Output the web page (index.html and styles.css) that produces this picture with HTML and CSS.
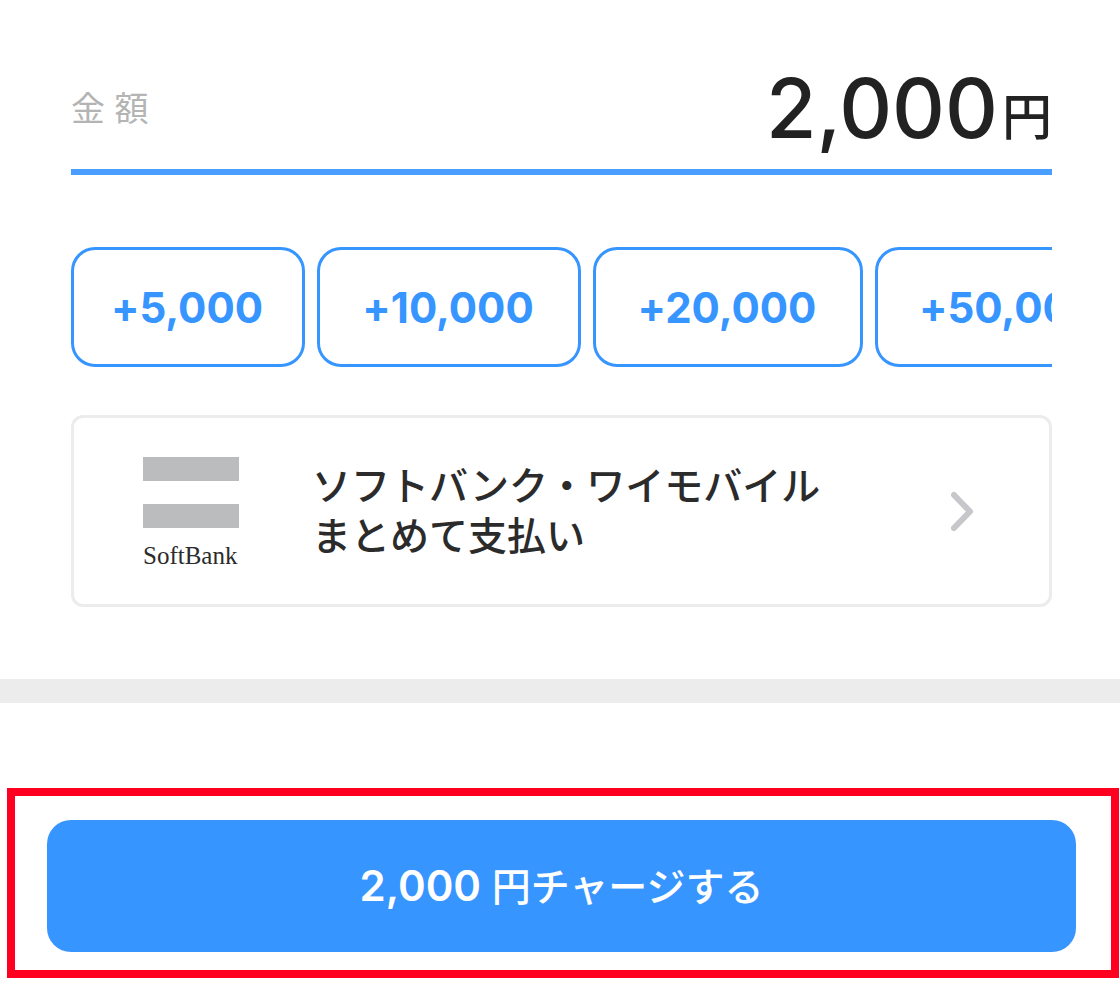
FILE: index.html
```html
<!DOCTYPE html>
<html lang="ja">
<head>
<meta charset="utf-8">
<meta name="viewport" content="width=device-width, initial-scale=1">
<title>チャージ</title>
<link rel="stylesheet" href="styles.css">
</head>
<body>
<main>
  <section class="charge">
    <div class="amount">
      <h1 class="amount-label">金 額</h1>
      <p class="amount-value"><span class="number">2,000</span><span class="yen">円</span></p>
    </div>
    <div class="presets">
      <button class="preset preset-small" type="button">+5,000</button>
      <button class="preset" type="button">+10,000</button>
      <button class="preset preset-large" type="button">+20,000</button>
      <button class="preset preset-large" type="button">+50,000</button>
    </div>
    <button class="method" type="button">
      <span class="brand">
        <span class="bar"></span>
        <span class="bar"></span>
        <span class="brand-name">SoftBank</span>
      </span>
      <span class="method-name">ソフトバンク・ワイモバイル<br>まとめて支払い</span>
      <svg class="chevron" viewBox="0 0 24 40" aria-hidden="true"><path d="M3 4L19 20.500L3 37"/></svg>
    </button>
  </section>
  <section class="action">
    <div class="highlight">
      <button class="submit" type="button">2,000 <span class="submit-text">円チャージする</span></button>
    </div>
  </section>
</main>
</body>
</html>
```

FILE: styles.css
```css
* { box-sizing: border-box; }
body {
  margin: 0;
  background: #fff;
  color: #222;
  font-family: Inter, "Noto Sans CJK JP", sans-serif;
  font-feature-settings: "calt" 0;
}
button { font: inherit; font-feature-settings: inherit; margin: 0; cursor: pointer; }
.charge { padding: 48px 68px 72px 71px; }
.amount {
  display: flex;
  justify-content: space-between;
  align-items: center;
  height: 127px;
  border-bottom: 6px solid #4a9eff;
}
.amount-label {
  margin: 0;
  font-size: 34px;
  font-weight: 400;
  line-height: 48px;
  color: #b4b4b4;
}
.amount-value { display: flex; align-items: flex-end; margin: 0; font-weight: 500; }
.number { font-size: 82px; line-height: 90px; }
.yen {
  margin-left: 4px;
  font-family: "Noto Sans CJK JP", sans-serif;
  font-size: 50px;
  line-height: 82px;
}
.presets {
  display: flex;
  gap: 12px;
  margin-top: 72px;
  overflow-x: auto;
  scrollbar-width: none;
}
.preset {
  flex: none;
  width: 264px;
  height: 120px;
  padding: 0 2px 0 0;
  border: 3px solid #3795ff;
  border-radius: 24px;
  background: #fff;
  color: #3795ff;
  font-size: 42px;
  font-weight: 700;
}
.preset-small { width: 234px; }
.preset-large { width: 270px; }
.method {
  display: flex;
  align-items: center;
  width: 100%;
  height: 192px;
  margin-top: 48px;
  padding: 0 74px 0 69px;
  border: 3px solid #ececec;
  border-radius: 12px;
  background: #fff;
  color: #2b2b2b;
  text-align: left;
}
.brand { display: flex; flex-direction: column; width: 96px; padding-top: 2px; }
.bar { height: 24px; margin-bottom: 23px; background: #bbbcbe; }
.bar + .bar { margin-bottom: 16px; }
.brand-name {
  font-family: "Liberation Serif", serif;
  font-size: 25px;
  line-height: 24px;
  white-space: nowrap;
}
.method-name {
  margin-left: 73px;
  font-size: 39px;
  font-weight: 500;
  line-height: 50px;
}
.chevron {
  width: 24px;
  height: 40px;
  margin-left: auto;
  fill: none;
  stroke: #c7c7cb;
  stroke-width: 6;
  stroke-linecap: round;
  stroke-linejoin: round;
}
.action { padding: 85px 1px 18px 7px; border-top: 24px solid #ececec; }
.highlight { padding: 24px 35px 18px 32px; border: 8px solid #ff0020; }
.submit {
  display: block;
  width: 100%;
  height: 132px;
  border: 0;
  border-radius: 24px;
  background: #3795ff;
  color: #fff;
  font-size: 42px;
  font-weight: 600;
  line-height: 48px;
}
.submit-text { font-size: 39px; font-weight: 500; }
```
